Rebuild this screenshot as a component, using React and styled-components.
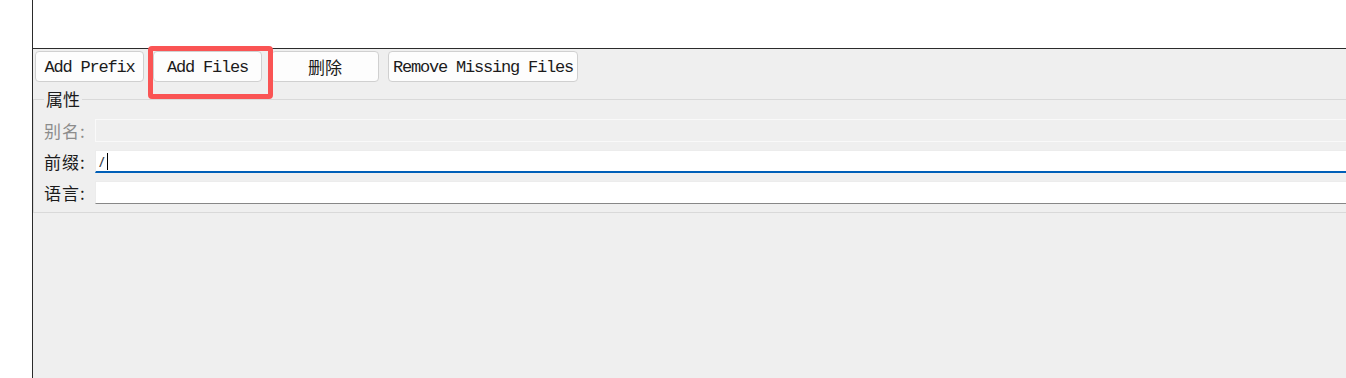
import React from "react";
import styled, { createGlobalStyle } from "styled-components";

const GlobalStyle = createGlobalStyle`
  html, body { margin: 0; padding: 0; background: #ffffff; }
  body { font-family: "Noto Sans CJK SC", "Noto Sans", sans-serif; }
  * { box-sizing: border-box; }
`;

const Frame = styled.div`
  display: flex;
  width: 1346px;
  height: 378px;
  overflow: hidden;
  background: #ffffff;
`;

const Gutter = styled.div`
  width: 32px;
  flex: none;
`;

const Main = styled.div`
  flex: 1;
  display: flex;
  flex-direction: column;
  border-left: 1px solid #2b2b2b;
  min-width: 0;
`;

const TopArea = styled.div`
  height: 49px;
  flex: none;
  background: #ffffff;
  border-bottom: 1px solid #2b2b2b;
`;

const Panel = styled.div`
  flex: 1;
  background: #efefef;
  display: flex;
  flex-direction: column;
`;

const Toolbar = styled.div`
  display: flex;
  gap: 9px;
  padding: 2px 0 0 2px;
  height: 33px;
`;

const ButtonSlot = styled.div`
  position: relative;
  display: flex;
`;

const Highlight = styled.div`
  position: absolute;
  left: -5px;
  top: -5px;
  right: -11px;
  bottom: -17px;
  border: 5px solid #fa5454;
  border-radius: 4px;
  pointer-events: none;
`;

const Button = styled.button`
  height: 31px;
  min-width: ${(p) => p.$w || 108}px;
  padding: ${(p) => (p.$cjk ? "0 4px" : "2px 4px 0")};
  margin: 0;
  background: #fdfdfd;
  border: 1px solid #d0d0d0;
  border-radius: 4px;
  color: #1b1b1b;
  font-family: ${(p) =>
    p.$cjk
      ? `"Noto Sans CJK SC", sans-serif`
      : `"Liberation Mono", "DejaVu Sans Mono", monospace`};
  font-size: 17px;
  letter-spacing: ${(p) => (p.$cjk ? "0" : "-1.2px")};
  line-height: 27px;
  text-align: center;
  white-space: nowrap;
`;

const Group = styled.fieldset`
  margin: 8px -20px 0 0;
  padding: 11px 0 8px 10px;
  border: 1px solid #d9d9d9;
  border-radius: 0;
  min-width: 0;
`;

const Legend = styled.legend`
  margin-left: 0;
  padding: 0 2px;
  font-family: "Noto Sans CJK SC", sans-serif;
  font-size: 17px;
  line-height: 18px;
  color: #1b1b1b;
`;

const Form = styled.div`
  display: grid;
  grid-template-columns: 51px 1fr;
  grid-auto-rows: 23px;
  row-gap: 8px;
  align-items: center;
`;

const Label = styled.div`
  font-family: "Noto Sans CJK SC", sans-serif;
  font-size: 17px;
  letter-spacing: 1px;
  line-height: 23px;
  color: ${(p) => (p.$disabled ? "#8c8c8c" : "#1b1b1b")};
  white-space: nowrap;
`;

const Field = styled.div`
  height: 23px;
  display: flex;
  align-items: center;
  padding-left: 3px;
  background: ${(p) => (p.$disabled ? "#efefef" : "#ffffff")};
  border: 1px solid ${(p) => (p.$disabled ? "#f9f9f9" : "#ececec")};
  border-bottom: ${(p) =>
    p.$focused
      ? "2px solid #005fb8"
      : p.$disabled
      ? "1px solid #f9f9f9"
      : "1px solid #878787"};
  border-right: none;
  font-family: "Noto Sans", sans-serif;
  font-size: 15px;
  color: #3a3f4a;
`;

const Caret = styled.span`
  display: inline-block;
  width: 1px;
  height: 17px;
  margin-left: 2px;
  background: #000000;
`;

export default function App() {
  return (
    <>
      <GlobalStyle />
      <Frame>
        <Gutter />
        <Main>
          <TopArea />
          <Panel>
            <Toolbar>
              <Button $w={109}>Add Prefix</Button>
              <ButtonSlot>
                <Button $w={109}>Add Files</Button>
                <Highlight />
              </ButtonSlot>
              <Button $cjk>删除</Button>
              <Button $w={189}>Remove Missing Files</Button>
            </Toolbar>
            <Group>
              <Legend>属性</Legend>
              <Form>
                <Label $disabled>别名:</Label>
                <Field $disabled />
                <Label>前缀:</Label>
                <Field $focused>
                  /<Caret />
                </Field>
                <Label>语言:</Label>
                <Field />
              </Form>
            </Group>
          </Panel>
        </Main>
      </Frame>
    </>
  );
}
